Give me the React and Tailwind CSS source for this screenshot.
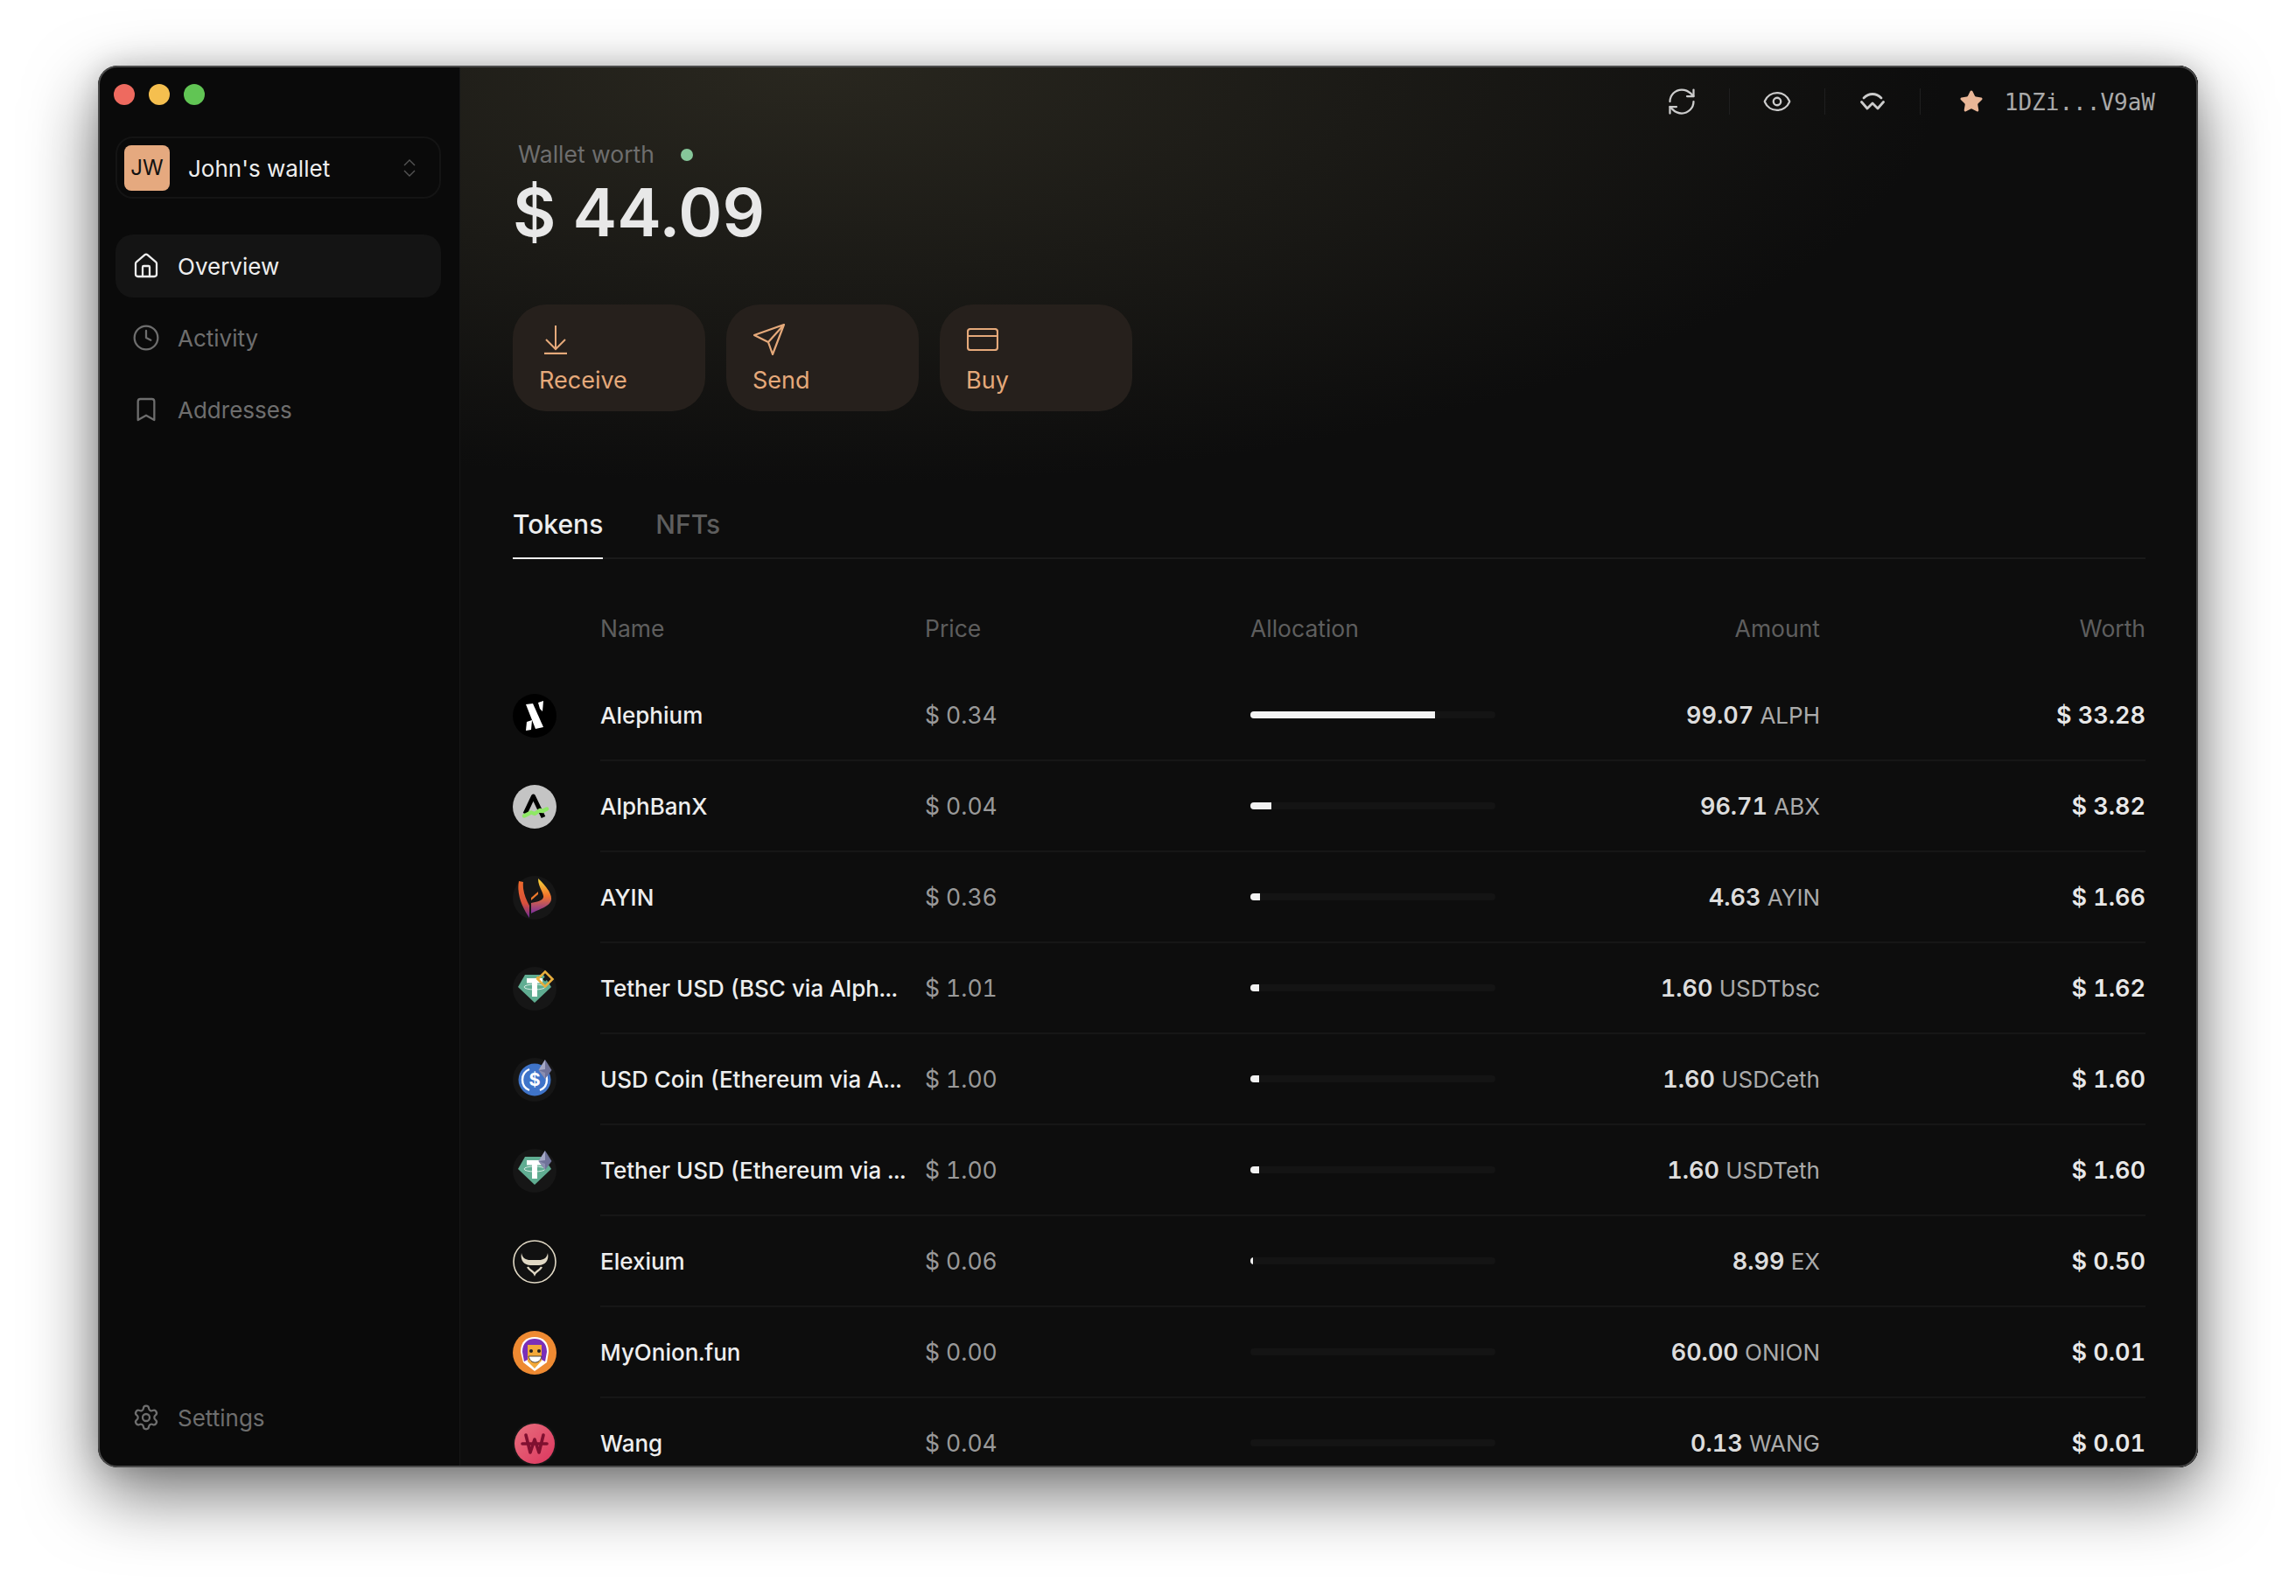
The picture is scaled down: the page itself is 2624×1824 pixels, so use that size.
import { House, Clock, Bookmark, Settings, RefreshCw, Eye, Star } from "lucide-react";

function Coin({ children, bg = "#161616" }) {
  return (
    <svg width="50" height="50" viewBox="0 0 50 50" className="shrink-0">
      <circle cx="25" cy="25" r="25" fill={bg} />
      {children}
    </svg>
  );
}

const EthBadge = () => (
  <g>
    <polygon points="37,2 44.5,14 37,24 29.5,14" fill="#6f7299" />
    <polygon points="37,2 37,13 29.500,14" fill="#a5a8c6" />
    <polygon points="37,17 37,24 29.500,14" fill="#8b8eb0" />
  </g>
);

const TetherGem = () => (
  <g>
    <polygon points="14,9 35,9 44,23 25,41 6,23" fill="#60ad92" />
    <path d="M16 13h18v5.5h-6V34h-6V18.5h-6z" fill="#fff" />
    <ellipse cx="25" cy="23" rx="12" ry="3" fill="none" stroke="#fff" strokeWidth="1" opacity="0.75" />
  </g>
);

const icons = {
  alph: (
    <Coin bg="#000">
      <polygon points="15,12 23,11 35,38 26,40" fill="#fff" />
      <polygon points="29,10 35,8 34,20 31,17" fill="#fff" />
      <polygon points="16,32 22,30 21,41 15,42" fill="#fff" />
    </Coin>
  ),
  abx: (
    <Coin bg="#c4c4c4">
      <path d="M14 33L23.500 13L35 37" fill="none" stroke="#000" strokeWidth="5" strokeLinejoin="round" />
      <path d="M13 35.500l8-4 4 1.500 6-4 3 1 5-2.500" fill="none" stroke="#8fe866" strokeWidth="4.500" strokeLinecap="round" strokeLinejoin="round" />
    </Coin>
  ),
  ayin: (
    <Coin>
      <defs>
        <linearGradient id="ayinA" x1="0" y1="0" x2="0" y2="1">
          <stop offset="0" stopColor="#ee6a2c" />
          <stop offset="0.6" stopColor="#d8503a" />
          <stop offset="1" stopColor="#6a2a9a" />
        </linearGradient>
        <linearGradient id="ayinB" x1="0" y1="0" x2="0" y2="1">
          <stop offset="0" stopColor="#f6d83a" />
          <stop offset="0.5" stopColor="#f0722c" />
          <stop offset="1" stopColor="#7a2f9e" />
        </linearGradient>
      </defs>
      <path d="M7 6l5 1c-1 9 2 18 7 27v14C12 38 4 22 7 6z" fill="url(#ayinA)" />
      <path d="M29 3c7 6 16 17 15 24-1 8-14 11-23 16V31c6-1 15-3 14-8-1-6-6-11-6-20z" fill="url(#ayinB)" />
      <path d="M21 25l8-7v3l-8 7z" fill="#ee7a2c" />
    </Coin>
  ),
  usdtbsc: (
    <Coin>
      <TetherGem />
      <g fill="none" stroke="#e8ae3c" strokeWidth="2.600">
        <rect x="31" y="8" width="12" height="12" transform="rotate(45 37 14)" />
      </g>
      <rect x="27" y="11" width="3" height="3" transform="rotate(45 28.500 12.500)" fill="#e8ae3c" />
      <rect x="35" y="12" width="4" height="4" transform="rotate(45 37 14)" fill="#161616" />
    </Coin>
  ),
  usdc: (
    <Coin>
      <circle cx="25" cy="25" r="18.500" fill="#3f74c9" />
      <path d="M19 13a13 13 0 0 0 0 24M31 13a13 13 0 0 1 0 24" fill="none" stroke="#fff" strokeWidth="2.400" />
      <text x="25" y="32" textAnchor="middle" fontFamily="Inter, sans-serif" fontWeight="700" fontSize="20" fill="#fff">$</text>
      <EthBadge />
    </Coin>
  ),
  usdteth: (
    <Coin>
      <TetherGem />
      <EthBadge />
    </Coin>
  ),
  ex: (
    <Coin bg="#111">
      <circle cx="25" cy="25" r="24" fill="none" stroke="#e0d8c4" strokeWidth="1.600" />
      <path d="M10 15c1 6 5 8 10 8h10c5 0 9-2 10-8 2 9-4 14-10 14H20C14 29 8 24 10 15z" fill="#e0d8c4" />
      <path d="M17 31c3 5 6 4 8 8 2-4 5-3 8-8" fill="none" stroke="#e0d8c4" strokeWidth="2.400" />
    </Coin>
  ),
  onion: (
    <Coin bg="#ee8a32">
      <path d="M9 24C9 12 16 7 25 7s16 5 16 17l-2 12-14 10-13-10z" fill="#fff" />
      <path d="M11 24c0-11 7-15 14-15s14 4 14 15l-2 11-4-2V18H17v15l-4 2z" fill="#7a2fb8" />
      <path d="M17 16h16v18l-8 9-8-8z" fill="#f3a93a" />
      <circle cx="21" cy="23" r="2" fill="#222" />
      <circle cx="30" cy="23" r="2" fill="#222" />
      <path d="M18 29h15c-1 5-4 7-7.500 7s-6-2-7.500-7z" fill="#fff" stroke="#222" strokeWidth="0.800" />
    </Coin>
  ),
  wang: (
    <Coin>
      <defs>
        <linearGradient id="wangBg" x1="0" y1="0" x2="1" y2="1">
          <stop offset="0" stopColor="#e8707e" />
          <stop offset="1" stopColor="#dc355e" />
        </linearGradient>
      </defs>
      <circle cx="25" cy="25" r="23" fill="url(#wangBg)" />
      <path d="M15 15l5 20 5-15 5 15 5-20M11 25h28" fill="none" stroke="#7f1030" strokeWidth="3.600" strokeLinecap="round" strokeLinejoin="round" />
    </Coin>
  ),
};

const tokens = [
  { id: "alph", name: "Alephium", price: "$ 0.34", alloc: 211, amount: "99.07", symbol: "ALPH", worth: "$ 33.28" },
  { id: "abx", name: "AlphBanX", price: "$ 0.04", alloc: 24, amount: "96.71", symbol: "ABX", worth: "$ 3.82" },
  { id: "ayin", name: "AYIN", price: "$ 0.36", alloc: 11, amount: "4.63", symbol: "AYIN", worth: "$ 1.66" },
  { id: "usdtbsc", name: "Tether USD (BSC via Alph...", price: "$ 1.01", alloc: 10, amount: "1.60", symbol: "USDTbsc", worth: "$ 1.62" },
  { id: "usdc", name: "USD Coin (Ethereum via A...", price: "$ 1.00", alloc: 10, amount: "1.60", symbol: "USDCeth", worth: "$ 1.60" },
  { id: "usdteth", name: "Tether USD (Ethereum via ...", price: "$ 1.00", alloc: 10, amount: "1.60", symbol: "USDTeth", worth: "$ 1.60" },
  { id: "ex", name: "Elexium", price: "$ 0.06", alloc: 3, amount: "8.99", symbol: "EX", worth: "$ 0.50" },
  { id: "onion", name: "MyOnion.fun", price: "$ 0.00", alloc: 0, amount: "60.00", symbol: "ONION", worth: "$ 0.01" },
  { id: "wang", name: "Wang", price: "$ 0.04", alloc: 0, amount: "0.13", symbol: "WANG", worth: "$ 0.01" },
];

function NavItem({ icon: Icon, label, active }) {
  return (
    <div className={`flex h-[72px] items-center gap-[20px] rounded-[20px] pl-[19px] text-[26px] ${active ? "bg-[#141414] text-[#eeeeee]" : "text-[#6e6e6e]"}`}>
      <Icon size={32} strokeWidth={1.7} />
      <span>{label}</span>
    </div>
  );
}

function ActionButton({ icon, label }) {
  return (
    <button className="flex h-[122px] w-[220px] flex-col items-start rounded-[38px] bg-[#26201c] pl-[30px] pt-[22px] text-[27px] text-[#e5a97a]">
      <div className="ml-[1px] flex h-[36px] w-[36px] items-center justify-center">{icon}</div>
      <span className="mt-[12px] leading-[34px]">{label}</span>
    </button>
  );
}

export default function App() {
  return (
    <div className="min-h-screen bg-white pl-[112px] pt-[75px] font-['Inter',sans-serif]">
      <div className="relative flex h-[1602px] w-[2400px] overflow-hidden rounded-[22px] bg-[#0a0a0a] shadow-[0_30px_80px_rgba(0,0,0,0.55),0_0_30px_rgba(0,0,0,0.15)]">
        {/* sidebar */}
        <aside className="flex w-[414px] shrink-0 flex-col border-r border-[#161616] pb-[21px] pl-[20px] pr-[21px]">
          <div className="ml-[-2px] mt-[21px] flex gap-[16px]">
            <div className="h-[24px] w-[24px] rounded-full bg-[#ee6a5f]" />
            <div className="h-[24px] w-[24px] rounded-full bg-[#f5bf4f]" />
            <div className="h-[24px] w-[24px] rounded-full bg-[#61c554]" />
          </div>
          <div className="mt-[36px] flex h-[71px] items-center rounded-[20px] border-2 border-[#141414] pl-[8px] pr-[26px]">
            <div className="flex h-[52px] w-[52px] items-center justify-center rounded-[8px] bg-[#e5a97f] text-[24px] text-[#111111]">JW</div>
            <span className="ml-[21px] pt-[1px] text-[26px] text-[#eeeeee]">John's wallet</span>
            <svg className="ml-auto" width="16" height="24" viewBox="0 0 16 24" fill="none" stroke="#555555" strokeWidth="1.400">
              <path d="M2 9l6-6 6 6M2 15l6 6 6-6" />
            </svg>
          </div>
          <nav className="mt-[41px] flex flex-col gap-[10px]">
            <NavItem icon={House} label="Overview" active />
            <NavItem icon={Clock} label="Activity" />
            <NavItem icon={Bookmark} label="Addresses" />
          </nav>
          <div className="mt-auto">
            <NavItem icon={Settings} label="Settings" />
          </div>
        </aside>

        {/* main */}
        <main className="flex-1 overflow-hidden bg-[#0d0d0d] bg-[radial-gradient(ellipse_1300px_480px_at_20%_0%,#29271f_0%,#0d0d0d_100%)] pt-[26px]">
          <div className="flex h-[30px] items-center justify-end pr-[49px] text-[#cccccc]">
            <div className="flex h-[30px] w-[109px] items-center justify-center border-r border-[#1f1f1f]">
              <RefreshCw size={36} strokeWidth={1.5} />
            </div>
            <div className="flex h-[30px] w-[109px] items-center justify-center border-r border-[#1f1f1f]">
              <Eye size={34} strokeWidth={1.6} />
            </div>
            <div className="flex h-[30px] w-[109px] items-center justify-center border-r border-[#1f1f1f]">
              <svg width="28" height="20" viewBox="0 0 28 20" fill="none" stroke="#cccccc" strokeWidth="2.800" strokeLinecap="round" strokeLinejoin="round">
                <path d="M4 6C7 3 10 1.500 14 1.500S21 3 24 6" />
                <path d="M1.500 10.500L8 18l6-6 6 6 6.500-7.500" />
              </svg>
            </div>
            <div className="ml-[44px] flex items-center gap-[24px]">
              <Star size={28} fill="#e9b697" stroke="#e9b697" strokeWidth={1.500} />
              <span className="pt-[1px] font-['DejaVu_Sans_Mono',monospace] text-[26px] leading-none text-[#aaaaaa]">1DZi...V9aW</span>
            </div>
          </div>

          <div className="pl-[60px] pr-[60px]">
            <div className="ml-[6px] mt-[29px] flex h-[34px] items-center text-[26.500px] text-[#6e6e6e]">
              <span>Wallet worth</span>
              <span className="ml-[30px] h-[14px] w-[14px] rounded-full bg-[#86c79a]" />
            </div>
            <div className="mt-[8px] text-[76px] font-semibold leading-[80px] text-[#e8e8e8]">$ 44.09</div>

            <div className="mt-[66px] flex gap-[24px]">
              <ActionButton
                icon={
                  <svg width="26" height="33" viewBox="0 0 26 33" fill="none" stroke="currentColor" strokeWidth="2">
                    <path d="M13 0v27M2 16l11 11 11-11" />
                    <path d="M0 32h26" strokeWidth="2.400" />
                  </svg>
                }
                label="Receive"
              />
              <ActionButton
                icon={
                  <svg width="36" height="36" viewBox="0 0 36 36" fill="none" stroke="currentColor" strokeWidth="2.200" strokeLinejoin="round">
                    <path d="M35 1L1 13l16 8 5 14zM35 1L17 21" />
                  </svg>
                }
                label="Send"
              />
              <ActionButton
                icon={
                  <svg width="36" height="26" viewBox="0 0 36 26" fill="none" stroke="currentColor" strokeWidth="2.200">
                    <rect x="1" y="1" width="34" height="24" rx="3" />
                    <path d="M1 9h34" />
                  </svg>
                }
                label="Buy"
              />
            </div>

            {/* tabs */}
            <div className="mt-[111px] flex gap-[60px] border-b-2 border-[#1a1a1a] text-[30px] font-medium">
              <div className="-mb-[2px] border-b-2 border-[#eeeeee] pb-[20px] leading-[36px] text-[#eeeeee]">Tokens</div>
              <div className="pb-[20px] leading-[36px] text-[#5e5e5e]">NFTs</div>
            </div>

            {/* table */}
            <div className="ml-[100px] mt-[60px] grid h-[34px] grid-cols-[371px_372px_280px_371px_372px] items-center text-[26.500px] text-[#5e5e5e]">
              <span>Name</span>
              <span>Price</span>
              <span>Allocation</span>
              <span className="text-right">Amount</span>
              <span className="text-right">Worth</span>
            </div>
            <div className="mt-[33px]">
              {tokens.map((t) => (
                <div key={t.id} className="flex h-[104px] items-center">
                  <div className="w-[100px] shrink-0">{icons[t.id]}</div>
                  <div className="grid h-full flex-1 grid-cols-[371px_372px_280px_371px_372px] items-center border-b-2 border-[#161616] tabular-nums">
                    <span className="whitespace-nowrap text-[26px] font-medium text-[#eeeeee]">{t.name}</span>
                    <span className="pt-[1px] text-[26.500px] text-[#999999]">{t.price}</span>
                    <div className="h-[8px] w-[280px] overflow-hidden rounded-full bg-[#141414]">
                      <div className="h-full bg-[#f2f2f2]" style={{ width: t.alloc }} />
                    </div>
                    <span className="pt-[3px] text-right text-[27px]">
                      <span className="font-semibold text-[#dddddd]">{t.amount}</span>{" "}
                      <span className="text-[26px] text-[#aaaaaa]">{t.symbol}</span>
                    </span>
                    <span className="pt-[3px] text-right text-[27px] font-semibold text-[#e8e8e8]">{t.worth}</span>
                  </div>
                </div>
              ))}
            </div>
          </div>
        </main>
        <div className="pointer-events-none absolute inset-0 rounded-[22px] border-2 border-[#4a4a4a]" />
      </div>
    </div>
  );
}
